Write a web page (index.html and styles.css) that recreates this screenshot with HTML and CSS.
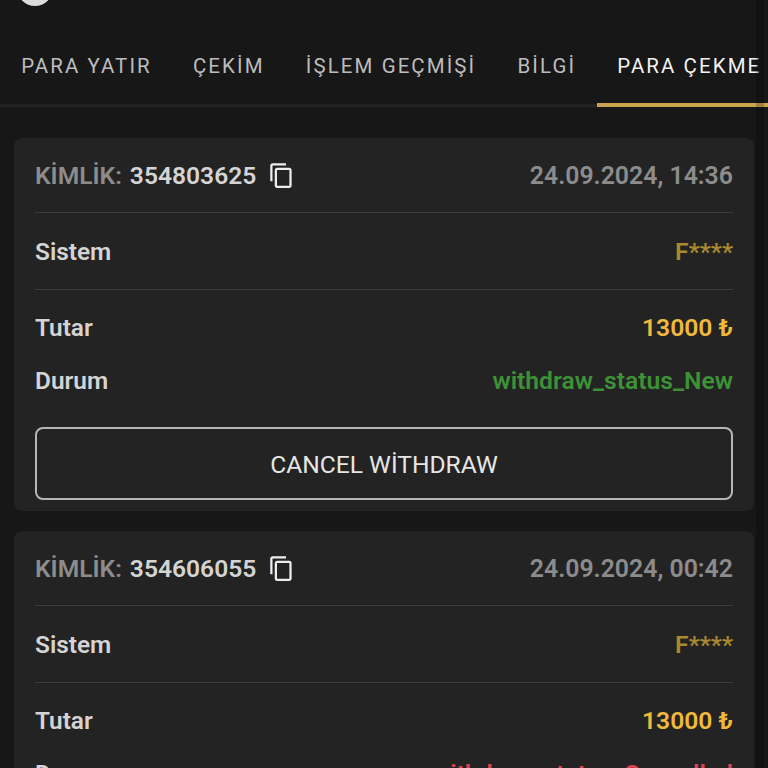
FILE: index.html
```html
<!DOCTYPE html>
<html lang="tr">
<head>
  <meta charset="UTF-8">
  <title>Para Çekme</title>
  <link rel="stylesheet" href="styles.css">
</head>
<body>

  <header class="topbar">
    <div class="avatar"></div>
  </header>

  <nav class="tabs">
    <a class="tab">PARA YATIR</a>
    <a class="tab">ÇEKİM</a>
    <a class="tab">İŞLEM GEÇMİŞİ</a>
    <a class="tab">BİLGİ</a>
    <a class="tab active">PARA ÇEKME</a>
  </nav>

  <section class="list">
    <div class="card">
      <div class="card-head">
        <span class="id-label">KİMLİK:</span>
        <span class="id-value">354803625</span>
        <svg class="copy" viewBox="0 0 24 24" width="27" height="27"><path d="M16 1H4c-1.1 0-2 .9-2 2v14h2V3h12V1zm3 4H8c-1.1 0-2 .9-2 2v14c0 1.1.9 2 2 2h11c1.1 0 2-.9 2-2V7c0-1.1-.9-2-2-2zm0 16H8V7h11v14z"/></svg>
        <span class="date">24.09.2024, 14:36</span>
      </div>
      <div class="row system-row">
        <span>Sistem</span>
        <span class="value system">F****</span>
      </div>
      <div class="details">
        <div class="row">
          <span>Tutar</span>
          <span class="value amount">13000 ₺</span>
        </div>
        <div class="row">
          <span>Durum</span>
          <span class="value status-new">withdraw_status_New</span>
        </div>
      </div>
      <button class="cancel">CANCEL WİTHDRAW</button>
    </div>

    <div class="card">
      <div class="card-head">
        <span class="id-label">KİMLİK:</span>
        <span class="id-value">354606055</span>
        <svg class="copy" viewBox="0 0 24 24" width="27" height="27"><path d="M16 1H4c-1.1 0-2 .9-2 2v14h2V3h12V1zm3 4H8c-1.1 0-2 .9-2 2v14c0 1.1.9 2 2 2h11c1.1 0 2-.9 2-2V7c0-1.1-.9-2-2-2zm0 16H8V7h11v14z"/></svg>
        <span class="date">24.09.2024, 00:42</span>
      </div>
      <div class="row system-row">
        <span>Sistem</span>
        <span class="value system">F****</span>
      </div>
      <div class="details">
        <div class="row">
          <span>Tutar</span>
          <span class="value amount">13000 ₺</span>
        </div>
        <div class="row">
          <span>Durum</span>
          <span class="value status-cancelled">withdraw_status_Cancelled</span>
        </div>
      </div>
    </div>
  </section>

  <div class="scrollbar"></div>

</body>
</html>
```

FILE: styles.css
```css
html, body {
  height: 768px;
  overflow: hidden;
}
body {
  margin: 0;
  font-family: Roboto, sans-serif;
  background-color: #171717;
  color: #d4d4d4;
}
.topbar {
  height: 6px;
  overflow: hidden;
}
.avatar {
  width: 36px;
  height: 36px;
  margin: -30px 0 0 17px;
  border-radius: 50%;
  background-color: #dcdcdc;
}
.tabs {
  display: flex;
  height: 98px;
  padding-left: 1px;
  border-bottom: 3px solid #232323;
  white-space: nowrap;
}
.tab {
  flex: none;
  padding: 0 20.6px;
  line-height: 121px;
  height: 101px;
  box-sizing: border-box;
  font-size: 20.45px;
  letter-spacing: 2.1px;
  color: #bdbdbd;
}
.tab:first-child {
  padding-left: 20.2px;
}
.tab.active {
  color: #f2f2f2;
  border-bottom: 4px solid #c9a44c;
  flex: 1;
}
.list {
  display: flex;
  flex-direction: column;
  gap: 20px;
  padding: 31px 14px 0;
}
.card {
  flex: none;
  padding: 0 21px 11px;
  background-color: #232323;
  border-radius: 8px;
}
.card-head {
  display: flex;
  align-items: center;
  height: 73px;
  padding-top: 1px;
  border-bottom: 1px solid #3d3d3d;
  font-size: 24.6px;
  font-weight: 600;
}
.id-label {
  color: #8c8c8c;
}
.id-value {
  margin-left: 8px;
  color: #d4d4d4;
}
.copy {
  margin: -1px 0 0 12px;
  fill: #eeeeee;
}
.date {
  margin-left: auto;
  font-size: 24.85px;
  color: #8c8c8c;
}
.row {
  display: flex;
  justify-content: space-between;
  align-items: center;
  font-size: 24.4px;
  font-weight: 600;
}
.value {
  font-size: 24.7px;
}
.system-row {
  height: 75px;
  padding-top: 1px;
  border-bottom: 1px solid #3d3d3d;
}
.system {
  color: #a98a2e;
}
.details {
  display: flex;
  flex-direction: column;
  gap: 19px;
  padding: 20px 0 30px;
}
.details .row {
  height: 34px;
}
.amount {
  color: #f0b93c;
}
.status-new {
  color: #3d9136;
}
.status-cancelled {
  color: #e0404f;
}
.cancel {
  display: block;
  width: 100%;
  height: 73px;
  padding-top: 3px;
  background: none;
  border: 2px solid #b5b5b5;
  border-radius: 8px;
  font-family: Roboto, sans-serif;
  font-size: 24.6px;
  color: #e6e6e6;
}
.scrollbar {
  position: fixed;
  top: 0;
  bottom: 0;
  right: 4px;
  width: 8px;
  background-color: rgba(0, 0, 0, 0.2);
}
```
